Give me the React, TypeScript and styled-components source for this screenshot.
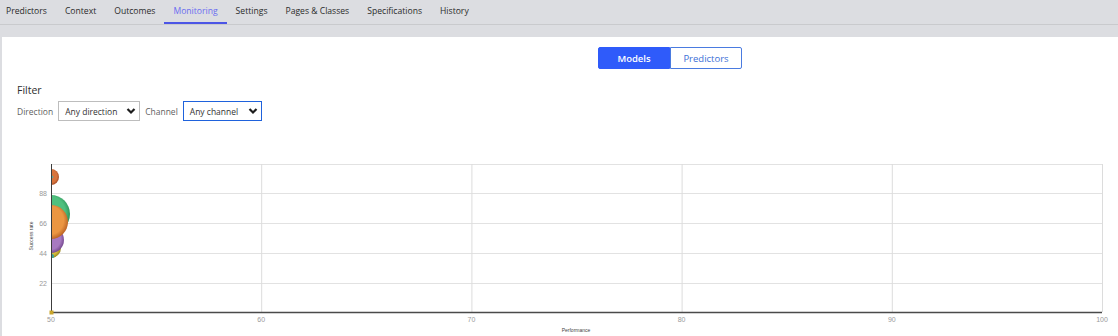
import React from "react";
import styled, { createGlobalStyle } from "styled-components";

const GlobalStyle = createGlobalStyle`
  html, body {
    margin: 0;
    padding: 0;
    background: #dcdde1;
    font-family: "Open Sans", "Noto Sans", sans-serif;
  }
  * { box-sizing: border-box; }
`;

const tabs = [
  "Predictors",
  "Context",
  "Outcomes",
  "Monitoring",
  "Settings",
  "Pages & Classes",
  "Specifications",
  "History",
];

const Page = styled.div`
  min-height: 100vh;
  display: flex;
  flex-direction: column;
`;

const TabBar = styled.nav`
  display: flex;
  height: 25px;
  border-bottom: 1px solid #c9cacd;
`;

const Tab = styled.div<{ $active?: boolean }>`
  display: flex;
  align-items: center;
  height: 24px;
  padding: 0 9px 1px;
  font-size: 8.6px;
  color: ${(p) => (p.$active ? "#6a6cf0" : "#2b2b2b")};
  border-bottom: 2px solid ${(p) => (p.$active ? "#4c55e6" : "transparent")};
  white-space: nowrap;

  &:first-child {
    padding-left: 6px;
  }
`;

const Panel = styled.main`
  flex: 1;
  margin: 12px 0 0 2px;
  background: #ffffff;
  padding-top: 10px;
`;

const ToggleRow = styled.div`
  display: flex;
  padding-left: 596px;
`;

const ToggleButton = styled.div<{ $on?: boolean; $w: number }>`
  display: flex;
  align-items: center;
  justify-content: center;
  width: ${(p) => p.$w}px;
  height: 22px;
  font-size: 9.5px;
  font-weight: ${(p) => (p.$on ? 600 : 400)};
  color: ${(p) => (p.$on ? "#ffffff" : "#3c6fd6")};
  background: ${(p) => (p.$on ? "#2f5bfa" : "#ffffff")};
  border: 1px solid ${(p) => (p.$on ? "#2f5bfa" : "#4a7be0")};
  border-radius: ${(p) => (p.$on ? "2px 0 0 2px" : "0 2px 2px 0")};
`;

const Filter = styled.section`
  padding: 13px 0 0 15px;
`;

const FilterTitle = styled.h3`
  margin: 0;
  font-size: 10.5px;
  font-weight: 400;
  color: #2e2e2e;
  line-height: 16px;
`;

const FilterRow = styled.div`
  display: flex;
  align-items: center;
  gap: 5px;
  margin-top: 3px;
`;

const FieldLabel = styled.span`
  font-size: 8.5px;
  color: #5f5f5f;
`;

const Select = styled.div<{ $focus?: boolean; $w: number }>`
  display: flex;
  align-items: center;
  justify-content: space-between;
  width: ${(p) => p.$w}px;
  height: 20px;
  padding: 0 3px 0 6px;
  font-size: 8.5px;
  color: #333333;
  border: 1px solid ${(p) => (p.$focus ? "#1f62dc" : "#bdbdbd")};
`;

const ChartWrap = styled.div`
  margin-top: 29px;
`;

const Chevron = () => (
  <svg width="10" height="8" viewBox="0 0 10 8">
    <path d="M1.5 2 L5 5.5 L8.5 2" fill="none" stroke="#1d1d1d" strokeWidth="2.2" />
  </svg>
);

type Bubble = { cy: number; r: number; color: string; edge: string };

const bubbles: Bubble[] = [
  { cy: 177, r: 8, color: "#d8743c", edge: "#9c4220" },
  { cy: 250, r: 8, color: "#4fbf7d", edge: "#22804a" },
  { cy: 248, r: 10, color: "#d4bb3a", edge: "#8d7a18" },
  { cy: 240, r: 13, color: "#a779c0", edge: "#6b3f86" },
  { cy: 214, r: 19, color: "#4fc07e", edge: "#25854f" },
  { cy: 222, r: 17, color: "#eb9642", edge: "#b0581e" },
];

const xTicks = [50, 60, 70, 80, 90, 100];
const yTicks = [
  { v: "88", y: 193 },
  { v: "66", y: 223 },
  { v: "44", y: 253 },
  { v: "22", y: 283 },
];

const xAt = (v: number) => 51 + ((v - 50) / 50) * 1051;

function Chart() {
  return (
    <svg width="1116" height="186" viewBox="2 150 1116 186" style={{ display: "block" }}>
      <defs>
        <clipPath id="plot">
          <rect x="51" y="150" width="1051" height="162" />
        </clipPath>
        {bubbles.map((b, i) => (
          <radialGradient key={i} id={`g${i}`} cx="45%" cy="45%" r="60%">
            <stop offset="0%" stopColor={b.color} />
            <stop offset="70%" stopColor={b.color} />
            <stop offset="100%" stopColor={b.edge} />
          </radialGradient>
        ))}
      </defs>
      {[164, 193, 223, 253, 283].map((y) => (
        <line key={y} x1="51" x2="1102" y1={y + 0.5} y2={y + 0.5} stroke="#e2e2e2" strokeWidth="1" />
      ))}
      {xTicks.slice(1).map((v) => (
        <line key={v} x1={xAt(v) + 0.5} x2={xAt(v) + 0.5} y1="164" y2="312" stroke="#dcdcdc" strokeWidth="1" />
      ))}
      <g clipPath="url(#plot)">
        {bubbles.map((b, i) => (
          <circle key={i} cx="51" cy={b.cy} r={b.r} fill={`url(#g${i})`} />
        ))}
        <circle cx="52" cy="177" r="1.3" fill="#5aa7a0" />
        <circle cx="52" cy="256" r="2" fill="#3aa29a" />
      </g>
      <line x1="51.5" x2="51.5" y1="164" y2="312" stroke="#3c3c3c" strokeWidth="1" />
      <line x1="51" x2="1102" y1="312.5" y2="312.5" stroke="#4a4a4a" strokeWidth="1.3" />
      <rect x="49.5" y="310.5" width="4" height="4" fill="#c9a52a" />
      {yTicks.map((t) => (
        <text key={t.v} x="47" y={t.y + 2.5} textAnchor="end" fontSize="7" fill="#999999"
          fontFamily="'Liberation Sans', sans-serif">
          {t.v}
        </text>
      ))}
      {xTicks.map((v) => (
        <text key={v} x={xAt(v)} y="322" textAnchor="middle" fontSize="7" fill="#999999"
          fontFamily="'Liberation Sans', sans-serif">
          {v}
        </text>
      ))}
      <text x="576" y="332" textAnchor="middle" fontSize="5" fill="#444"
        fontFamily="'Liberation Sans', sans-serif">
        Performance
      </text>
      <text x="0" y="0" transform="translate(33 236) rotate(-90)" textAnchor="middle" fontSize="5"
        fill="#444" fontFamily="'Liberation Sans', sans-serif">
        Success rate
      </text>
    </svg>
  );
}

export default function App() {
  return (
    <Page>
      <GlobalStyle />
      <TabBar>
        {tabs.map((t) => (
          <Tab key={t} $active={t === "Monitoring"}>
            {t}
          </Tab>
        ))}
      </TabBar>
      <Panel>
        <ToggleRow>
          <ToggleButton $on $w={72}>Models</ToggleButton>
          <ToggleButton $w={72}>Predictors</ToggleButton>
        </ToggleRow>
        <Filter>
          <FilterTitle>Filter</FilterTitle>
          <FilterRow>
            <FieldLabel>Direction</FieldLabel>
            <Select $w={82}>
              Any direction <Chevron />
            </Select>
            <FieldLabel>Channel</FieldLabel>
            <Select $focus $w={79}>
              Any channel <Chevron />
            </Select>
          </FilterRow>
        </Filter>
        <ChartWrap>
          <Chart />
        </ChartWrap>
      </Panel>
    </Page>
  );
}
